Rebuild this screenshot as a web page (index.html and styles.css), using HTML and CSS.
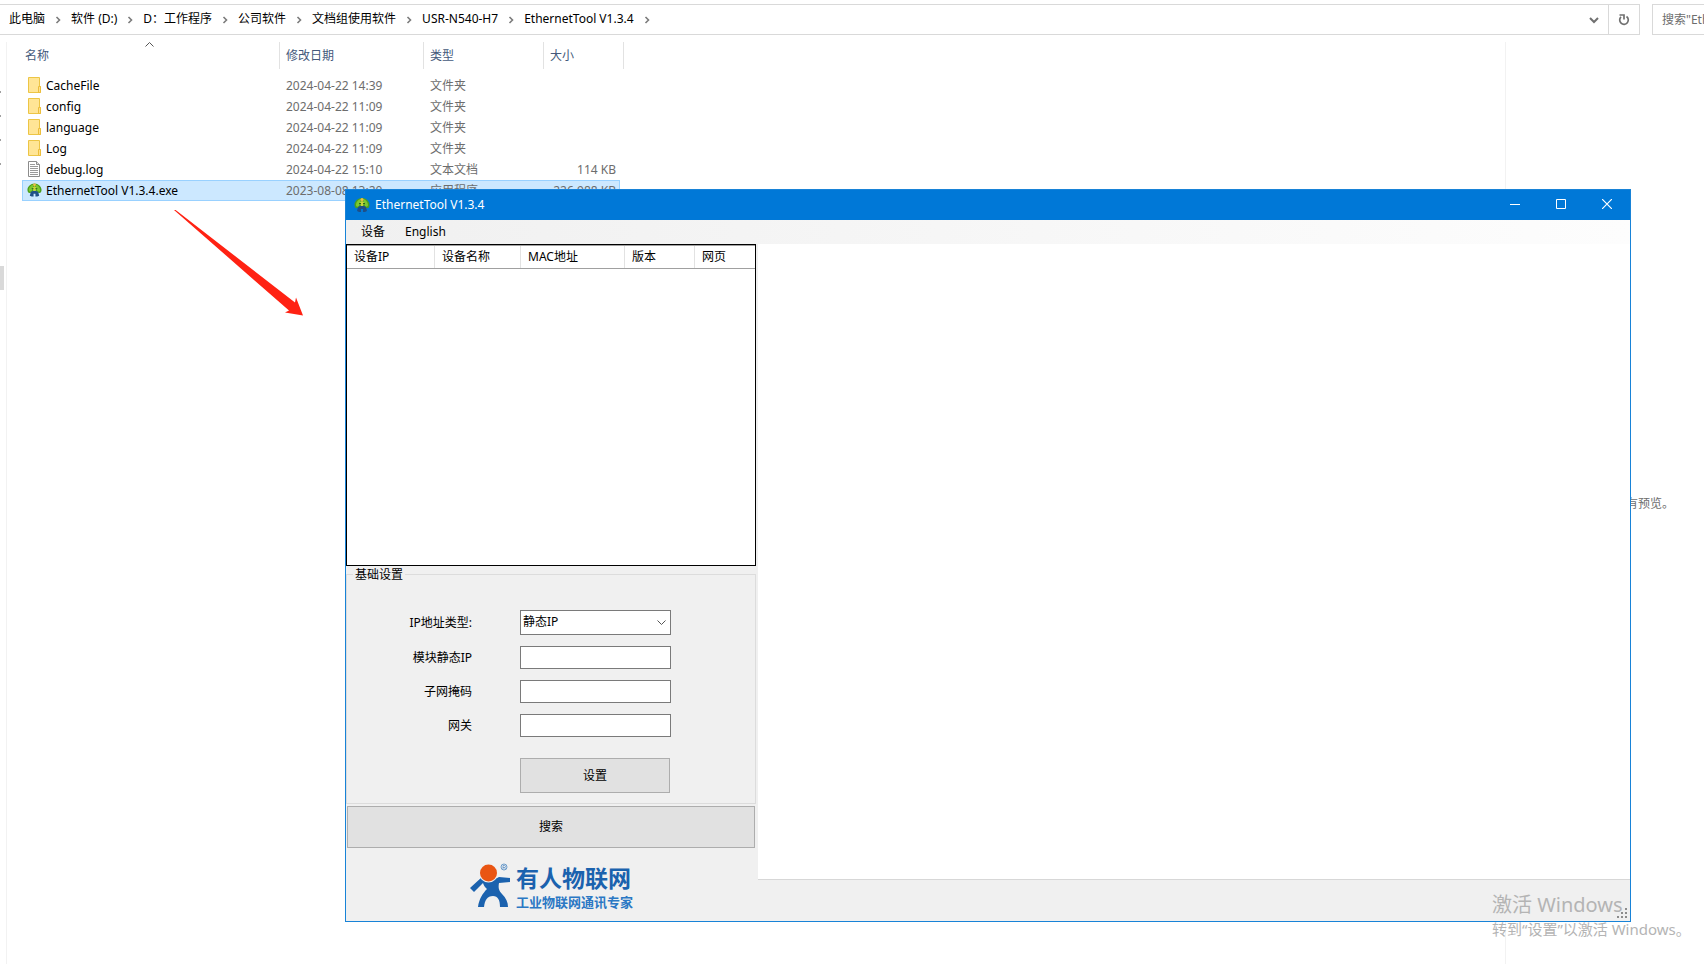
FILE: index.html
```
<!DOCTYPE html>
<html lang="zh-CN">
<head>
    <meta charset="UTF-8">
    <title>EthernetTool V1.3.4</title>
    <link rel="stylesheet" href="styles.css">
</head>
<body>
    <svg class="defs" width="0" height="0" aria-hidden="true">
        <symbol id="folder" viewBox="0 0 15 16">
            <path d="M1.500.5h11v9h1v6h-12z" fill="#ffe596" stroke="#ecc545"/>
            <path d="M11.500 15.500v-6h2v6z" fill="#ffe08a" stroke="#ecbe3c"/>
        </symbol>
        <symbol id="log" viewBox="0 0 15 16">
            <path d="M1.500.5h8l3 3v12h-11z" fill="#fff" stroke="#8c8c8c"/>
            <path d="M9.500.5v3h3" fill="#ddd" stroke="#8c8c8c"/>
            <path d="M3 3.500h5M3 5.500h8M3 7.500h8M3 9.500h8M3 11.500h8M3 13.500h8" stroke="#9a9a9a"/>
        </symbol>
        <symbol id="tool" viewBox="0 0 16 16">
            <path d="M1 10C-1 6 3 1 8 1s9 5 7 9c-1 2-3 1-4 0l-3-2-3 2c-1 1-3 2-4 0z" fill="#4c9f1c"/>
            <path d="M2 8c0-3 3-6 5-6L5 9c-1 1-3 1-3-1zM14 8c0-3-3-6-5-6l2 7c1 1 3 1 3-1z" fill="#7cc832"/>
            <path d="M4 10l2-1h4l2 1 1 4-2 1H9v-3H7v3H5l-2-1z" fill="#1f4f87"/>
            <path d="M6 5l2-1 2 1-1 4H7z" fill="#c9d53d"/>
            <circle cx="8" cy="2.500" r="1.500" fill="#f2bd45"/>
            <path d="M5 6h2v1H5zM9 6h2v1H9z" fill="#2a611c"/>
        </symbol>
        <symbol id="chevron" viewBox="0 0 6 8">
            <path d="M1.500 1l3 3-3 3" fill="none" stroke="#7b7b7b" stroke-width="1.600"/>
        </symbol>
    </svg>

    <div class="explorer">
        <div class="topbar">
            <nav class="address">
                <a href="#">此电脑</a><svg class="sep"><use href="#chevron"/></svg>
                <a href="#">软件 (D:)</a><svg class="sep"><use href="#chevron"/></svg>
                <a href="#">D：工作程序</a><svg class="sep"><use href="#chevron"/></svg>
                <a href="#">公司软件</a><svg class="sep"><use href="#chevron"/></svg>
                <a href="#">文档组使用软件</a><svg class="sep"><use href="#chevron"/></svg>
                <a href="#">USR-N540-H7</a><svg class="sep"><use href="#chevron"/></svg>
                <a href="#">EthernetTool V1.3.4</a><svg class="sep"><use href="#chevron"/></svg>
                <button class="history" aria-label="历史记录">
                    <svg width="10" height="7" viewBox="0 0 10 7"><path d="M1 1l4 4 4-4" fill="none" stroke="#707070" stroke-width="2"/></svg>
                </button>
                <button class="refresh" aria-label="刷新">
                    <svg width="12" height="12" viewBox="0 0 12 12"><path d="M8.500 2.500a4.300 4.300 0 1 1-5.500.4" fill="none" stroke="#707070" stroke-width="1.700"/><path d="M1.500 1H6v4.500" fill="none" stroke="#707070" stroke-width="1.700"/></svg>
                </button>
            </nav>
            <input class="search" type="text" placeholder='搜索"EthernetTool V1.3.4"' aria-label="搜索">
        </div>

        <div class="panes">
            <div class="tree">
                <i></i><i></i><i></i><i></i>
                <b></b>
            </div>
            <div class="files">
                <table>
                    <colgroup><col class="col-name"><col class="col-date"><col class="col-type"><col class="col-size"></colgroup>
                    <thead>
                        <tr>
                            <th>名称<svg class="sort" width="9" height="5" viewBox="0 0 9 5"><path d="M.5 4.500l4-4 4 4" fill="none" stroke="#555"/></svg></th>
                            <th>修改日期</th>
                            <th>类型</th>
                            <th>大小</th>
                        </tr>
                    </thead>
                    <tbody>
                        <tr><td><svg class="icon"><use href="#folder"/></svg>CacheFile</td><td>2024-04-22 14:39</td><td>文件夹</td><td></td></tr>
                        <tr><td><svg class="icon"><use href="#folder"/></svg>config</td><td>2024-04-22 11:09</td><td>文件夹</td><td></td></tr>
                        <tr><td><svg class="icon"><use href="#folder"/></svg>language</td><td>2024-04-22 11:09</td><td>文件夹</td><td></td></tr>
                        <tr><td><svg class="icon"><use href="#folder"/></svg>Log</td><td>2024-04-22 11:09</td><td>文件夹</td><td></td></tr>
                        <tr><td><svg class="icon"><use href="#log"/></svg>debug.log</td><td>2024-04-22 15:10</td><td>文本文档</td><td>114 KB</td></tr>
                        <tr class="selected"><td><svg class="icon"><use href="#tool"/></svg>EthernetTool V1.3.4.exe</td><td>2023-08-08 13:20</td><td>应用程序</td><td>226,988 KB</td></tr>
                    </tbody>
                </table>
            </div>
            <div class="preview">没有预览。</div>
        </div>
    </div>

    <svg class="arrow" width="130" height="108" viewBox="0 0 130 108">
        <path d="M0 0l1-.5 120 93 1-5 7 18-18-3 4-2z" fill="#ff2213"/>
    </svg>

    <div class="window">
        <div class="titlebar">
            <svg class="app-icon"><use href="#tool"/></svg>
            <span>EthernetTool V1.3.4</span>
            <div class="controls">
                <button aria-label="最小化"><svg width="10" height="10"><path d="M0 5.500h10" stroke="#fff"/></svg></button>
                <button aria-label="最大化"><svg width="10" height="10"><path d="M.5.5h9v9h-9z" fill="none" stroke="#fff"/></svg></button>
                <button aria-label="关闭"><svg width="10" height="10"><path d="M0 0l10 10M10 0L0 10" stroke="#fff" stroke-width="1.200"/></svg></button>
            </div>
        </div>
        <div class="menu">
            <button>设备</button>
            <button>English</button>
        </div>
        <div class="main">
            <div class="left">
                <div class="devices">
                    <table>
                        <colgroup><col class="col-ip"><col class="col-dev"><col class="col-mac"><col class="col-ver"><col></colgroup>
                        <tr><th>设备IP</th><th>设备名称</th><th>MAC地址</th><th>版本</th><th>网页</th></tr>
                    </table>
                </div>
                <fieldset>
                    <legend>基础设置</legend>
                    <div class="row">
                        <label for="type">IP地址类型:</label>
                        <div class="select">
                            <select id="type"><option>静态IP</option><option>动态IP</option></select>
                            <svg width="9" height="6" viewBox="0 0 9 6"><path d="M.5.5l4 4 4-4" fill="none" stroke="#555"/></svg>
                        </div>
                    </div>
                    <div class="row"><label for="ip">模块静态IP</label><input id="ip" type="text"></div>
                    <div class="row"><label for="mask">子网掩码</label><input id="mask" type="text"></div>
                    <div class="row"><label for="gateway">网关</label><input id="gateway" type="text"></div>
                    <button class="btn set">设置</button>
                </fieldset>
                <button class="btn find">搜索</button>
                <div class="logo">
                    <svg width="42" height="46" viewBox="0 0 42 46">
                        <path d="M0 25L12 14c6 3 12 3 17 0l11 1v4l-11 1c-1 5 0 8 3 11 4 4 6 8 6 13h-8c0-7-2-11-7-11-6 0-8 4-9 11H8c1-8 5-14 9-18-2-2-3-3-4-6L4 29z" fill="#1b62ae"/>
                        <circle cx="18.500" cy="10" r="9.500" fill="#efefef"/>
                        <circle cx="18.500" cy="10" r="8.500" fill="#e95513"/>
                        <circle cx="34" cy="4" r="3" fill="none" stroke="#4d88c2" stroke-width=".8"/>
                        <path d="M33 6V2.500h1.500a1 1 0 0 1 0 2H33m1.500 0L35.500 6" fill="none" stroke="#4d88c2" stroke-width=".7"/>
                    </svg>
                    <div>
                        <div class="brand">有人物联网</div>
                        <div class="slogan">工业物联网通讯专家</div>
                    </div>
                </div>
            </div>
            <div class="right">
                <div class="content"></div>
                <div class="status">
                    <svg width="10" height="10" fill="#8c8c8c"><path d="M8 0h2v2H8zM4 4h2v2H4zM8 4h2v2H8zM0 8h2v2H0zM4 8h2v2H4zM8 8h2v2H8z"/></svg>
                </div>
            </div>
        </div>
    </div>

    <div class="watermark">
        <div class="big">激活 Windows</div>
        <div>转到“设置”以激活 Windows。</div>
    </div>
</body>
</html>
```

FILE: styles.css
```
* {
    box-sizing: border-box;
}

body {
    margin: 0;
    background: #fff;
    color: #000;
    font: 12px/20px "Noto Sans", "Noto Sans CJK SC", sans-serif;
    overflow: hidden;
}

button, input, select {
    font: inherit;
    color: inherit;
    margin: 0;
    padding: 0;
    border: none;
    border-radius: 0;
    background: none;
}

a {
    color: inherit;
    text-decoration: none;
}

.defs {
    position: absolute;
}

/* file explorer */
.explorer {
    display: flex;
    flex-direction: column;
    min-height: 100vh;
}

.topbar {
    display: flex;
    gap: 12px;
    padding-top: 4px;
}

.address {
    flex: 1;
    display: flex;
    align-items: center;
    height: 31px;
    padding-left: 9px;
    border: 1px solid #d9d9d9;
    border-left: none;
    white-space: nowrap;
}

.address a {
    line-height: 20px;
    padding-bottom: 1px;
}

.sep {
    width: 6px;
    height: 8px;
    margin: 0 10px;
}

.history {
    margin-left: auto;
    width: 29px;
    height: 29px;
}

.refresh {
    display: flex;
    align-items: center;
    justify-content: center;
    width: 31px;
    height: 29px;
    border-left: 1px solid #d9d9d9;
}

.search {
    width: 52px;
    height: 31px;
    padding-left: 9px;
    border: 1px solid #d9d9d9;
    border-right: none;
}

.search::placeholder {
    color: #6d6d6d;
    opacity: 1;
}

.panes {
    flex: 1;
    display: flex;
    padding-top: 7px;
}

.tree {
    width: 7px;
    padding-top: 49px;
    border-right: 1px solid #f2f2f2;
}

.tree i {
    display: block;
    width: 1px;
    height: 2px;
    margin-bottom: 22px;
    background: #a0a0a0;
}

.tree b {
    display: block;
    width: 4px;
    height: 24px;
    margin-top: 101px;
    background: #d9d9d9;
}

.files {
    flex: 1;
    padding-left: 15px;
}

.files table {
    width: 598px;
    table-layout: fixed;
    border-collapse: separate;
    border-spacing: 0;
}

.col-name { width: 258px; }
.col-date { width: 144px; }
.col-type { width: 120px; }

.files th {
    position: relative;
    height: 27px;
    padding: 0 6px;
    border-right: 1px solid #e2e2e2;
    color: #44597b;
    font-weight: normal;
    text-align: left;
}

.files th:first-child {
    padding-left: 3px;
}

/* the last header is a little wider than its cells */
.files th:last-child {
    border-right: none;
    box-shadow: 3px 0 #fff, 4px 0 #e2e2e2;
}

.sort {
    position: absolute;
    left: 123px;
    top: 0;
}

.files tbody::before {
    content: "";
    display: block;
    height: 6px;
}

.files td {
    height: 21px;
    padding: 0 6px;
    border: 0 solid #99d1ff;
    color: #6d6d6d;
    line-height: 19px;
    white-space: nowrap;
}

.files td:first-child {
    padding-left: 5px;
    color: #000;
}

.files td:last-child {
    padding: 0 4px;
    text-align: right;
}

.files .selected td {
    background: #cce8ff;
    border-top-width: 1px;
    border-bottom-width: 1px;
}

.files .selected td:first-child {
    padding-left: 4px;
    border-left-width: 1px;
}

.files .selected td:last-child {
    padding-right: 3px;
    border-right-width: 1px;
}

.icon {
    width: 15px;
    height: 16px;
    margin-right: 4px;
    vertical-align: -3px;
}

.preview {
    width: 199px;
    padding: 452px 0 0 108px;
    border-left: 1px solid #f2f2f2;
    color: #6d6d6d;
    white-space: nowrap;
}

.arrow {
    position: absolute;
    left: 174px;
    top: 210px;
}

/* tool window */
.window {
    position: absolute;
    left: 345px;
    right: 73px;
    top: 189px;
    border: 1px solid #1883d7;
    background: #f0f0f0;
}

.titlebar {
    display: flex;
    align-items: center;
    height: 30px;
    padding-left: 8px;
    background: #0078d7;
    color: #fff;
}

.app-icon {
    width: 16px;
    height: 16px;
    margin-right: 5px;
}

.controls {
    display: flex;
    margin-left: auto;
}

.controls button {
    width: 46px;
    height: 30px;
}

.menu {
    display: flex;
    gap: 20px;
    height: 24px;
    padding-left: 15px;
    background: linear-gradient(to right, #f0f0f0, #fdfdfd);
}

.main {
    display: flex;
}

.left {
    width: 412px;
    padding-right: 2px;
}

.devices {
    height: 322px;
    border: 1px solid #000;
    background: #fff;
}

.devices table {
    width: 100%;
    table-layout: fixed;
    border-collapse: separate;
    border-spacing: 0;
}

.col-ip { width: 88px; }
.col-dev { width: 86px; }
.col-mac { width: 104px; }
.col-ver { width: 70px; }

.devices th {
    height: 24px;
    padding: 0 7px;
    border: 1px solid #a0a0a0;
    border-width: 1px 0;
    font-weight: normal;
    text-align: left;
    background: linear-gradient(#e2e2e2, #e2e2e2) right / 1px 100% no-repeat;
}

.devices th:last-child {
    background: none;
}

fieldset {
    display: flex;
    flex-direction: column;
    gap: 11px;
    margin: 0;
    padding: 27px 0 10px;
    border: 1px solid #dcdcdc;
}

legend {
    height: 17px;
    margin-left: 6px;
    padding: 0 2px;
    line-height: 18px;
}

.row {
    display: flex;
    align-items: center;
    gap: 48px;
}

.row label {
    width: 125px;
    text-align: right;
    white-space: nowrap;
}

.row input, .select {
    width: 151px;
    height: 23px;
    border: 1px solid #7a7a7a;
    background: #fff;
}

.select {
    position: relative;
    height: 25px;
}

.select select {
    width: 100%;
    height: 21px;
    padding-left: 2px;
    appearance: none;
}

.select svg {
    position: absolute;
    right: 4px;
    top: 9px;
    pointer-events: none;
}

.btn {
    border: 1px solid #adadad;
    background: #e1e1e1;
}

.set {
    width: 150px;
    height: 35px;
    margin: 10px 0 0 173px;
}

.find {
    display: block;
    width: 408px;
    height: 42px;
    margin: 2px 1px 0;
}

.logo {
    display: flex;
    gap: 4px;
    padding: 15px 0 10px 124px;
    color: #1b62ae;
    font-family: "Noto Sans CJK SC", sans-serif;
}

.brand {
    font-size: 23px;
    line-height: 29px;
    font-weight: bold;
}

.slogan {
    color: #2b78c4;
    font-size: 13px;
    line-height: 19px;
    font-weight: bold;
}

.right {
    flex: 1;
    display: flex;
    flex-direction: column;
}

.content {
    flex: 1;
    background: #fff;
}

.status {
    display: flex;
    justify-content: flex-end;
    align-items: flex-end;
    height: 42px;
    padding: 3px;
    border-top: 1px solid #d7d7d7;
}

.watermark {
    position: absolute;
    right: 12px;
    bottom: 23px;
    width: 200px;
    color: #b4b4b4;
    font-size: 15px;
    line-height: 24px;
    white-space: nowrap;
}

.watermark .big {
    font-size: 20px;
}
```
